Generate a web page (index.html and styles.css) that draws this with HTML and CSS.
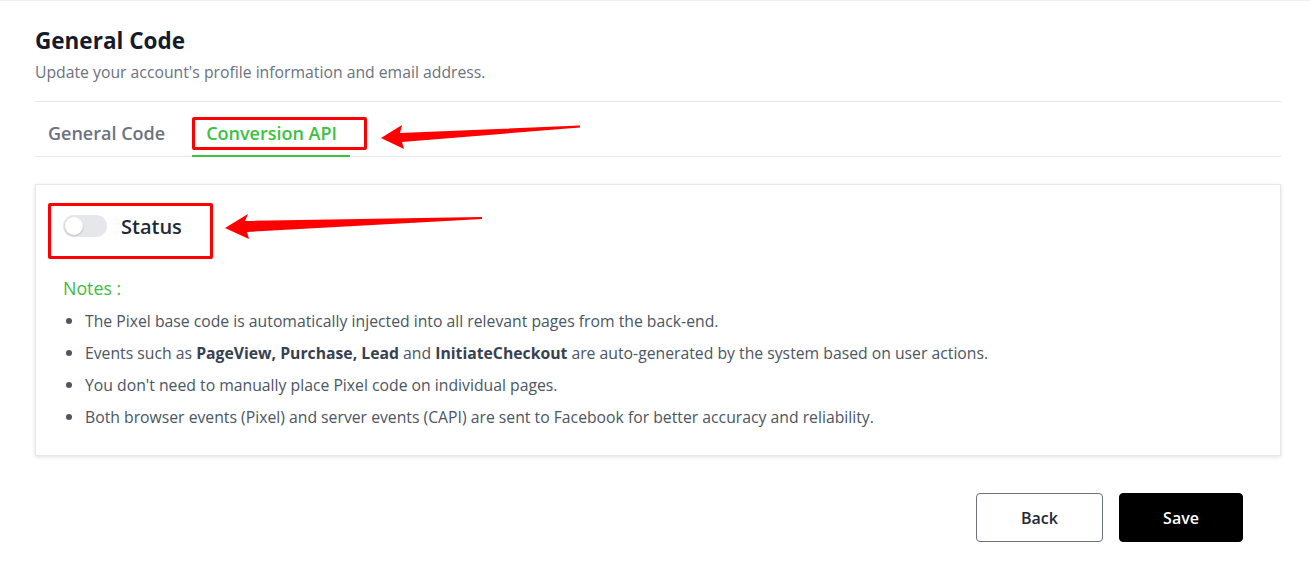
FILE: index.html
```html
<!DOCTYPE html>
<html lang="en">
<head>
<meta charset="utf-8">
<title>General Code</title>
<link rel="stylesheet" href="styles.css">
</head>
<body>
<div class="page">
  <header class="header">
    <h1 class="title">General Code</h1>
    <p class="subtitle">Update your account's profile information and email address.</p>
  </header>

  <nav class="tabs">
    <a class="tab">General Code</a>
    <a class="tab tab-active">Conversion API</a>
  </nav>

  <section class="card">
    <div class="status-row">
      <span class="toggle"><span class="knob"></span></span>
      <span class="status-label">Status</span>
    </div>
    <div class="notes-title">Notes :</div>
    <ul class="notes">
      <li>The Pixel base code is automatically injected into all relevant pages from the back-end.</li>
      <li>Events such as <b>PageView, Purchase, Lead</b> and <b>InitiateCheckout</b> are auto-generated by the system based on user actions.</li>
      <li>You don't need to manually place Pixel code on individual pages.</li>
      <li>Both browser events (Pixel) and server events (CAPI) are sent to Facebook for better accuracy and reliability.</li>
    </ul>
  </section>

  <div class="actions">
    <button class="btn btn-back">Back</button>
    <button class="btn btn-save">Save</button>
  </div>

  <div class="mark mark-tab"></div>
  <div class="mark mark-status"></div>
  <svg class="arrows" width="1310" height="575" viewBox="0 0 1310 575">
    <polygon fill="#ff0000" points="381,137 402,124 400,132 580,124.5 580,126.5 402,141 404,148"/>
    <polygon fill="#ff0000" points="225,227 248,213 245,220 482,216 482,218 247,231 249,238"/>
  </svg>
</div>
</body>
</html>
```

FILE: styles.css
```css
* { box-sizing: border-box; }

html, body {
  margin: 0;
  padding: 0;
  background: #ffffff;
}

body {
  font-family: "Open Sans", "Noto Sans", "Liberation Sans", sans-serif;
  color: #4b5563;
}

.page {
  position: relative;
  width: 1310px;
  height: 575px;
  border-top: 1px solid #eeeeee;
  padding: 25px 29px 0 35px;
}

.header {
  border-bottom: 1px solid #e5e7eb;
  padding-bottom: 18px;
}

.title {
  margin: 0 0 5px 0;
  font-size: 22.5px;
  line-height: 30px;
  font-weight: 700;
  color: #151b2b;
}

.subtitle {
  margin: 0;
  font-size: 15.75px;
  line-height: 22px;
  color: #6b7280;
}

.tabs {
  display: flex;
  gap: 14px;
  height: 55px;
  border-bottom: 1px solid #e5e7eb;
}

.tab {
  display: flex;
  align-items: center;
  padding: 8px 13px 0 13px;
  font-size: 18px;
  font-weight: 600;
  color: #6b7280;
  border-bottom: 2px solid transparent;
  margin-bottom: -1px;
}

.tab-active {
  padding-left: 14px;
  color: #3bc23f;
  border-bottom-color: #3bc23f;
}

.card {
  margin-top: 27px;
  border: 1px solid #e5e7eb;
  box-shadow: 0 1px 4px rgba(0, 0, 0, 0.12);
  padding: 26px 28px 25px 27px;
  height: 272px;
}

.status-row {
  display: flex;
  align-items: center;
  gap: 14px;
  height: 30px;
}

.toggle {
  position: relative;
  display: inline-block;
  width: 44px;
  height: 22px;
  border-radius: 11px;
  background: #e5e7eb;
}

.knob {
  position: absolute;
  top: 2px;
  left: 2px;
  width: 18px;
  height: 18px;
  border-radius: 50%;
  background: #ffffff;
  box-shadow: 0 1px 2px rgba(0, 0, 0, 0.2);
}

.status-label {
  font-size: 20px;
  font-weight: 600;
  color: #1f2937;
}

.notes-title {
  margin-top: 35px;
  font-size: 17.8px;
  line-height: 24px;
  color: #3dbb45;
}

.notes {
  margin: 5px 0 0 0;
  padding-left: 22px;
  font-size: 15.75px;
  line-height: 31px;
  color: #4b5563;
}

.notes li::marker {
  font-size: 17px;
}

.notes b {
  font-weight: 700;
  color: #374151;
}

.actions {
  display: flex;
  justify-content: flex-end;
  gap: 16px;
  margin-top: 37px;
  padding-right: 38px;
}

.btn {
  font-family: "Open Sans", "Noto Sans", "Liberation Sans", sans-serif;
  font-size: 16px;
  font-weight: 600;
  height: 49px;
  border-radius: 4px;
  cursor: pointer;
}

.btn-back {
  width: 127px;
  background: #ffffff;
  border: 1px solid #6b7280;
  color: #1f2937;
}

.btn-save {
  width: 124px;
  background: #000000;
  border: 1px solid #000000;
  color: #ffffff;
}

.mark {
  position: absolute;
  border: 3px solid #ff0000;
  border-radius: 2px;
  pointer-events: none;
}

.mark-tab {
  left: 192px;
  top: 116px;
  width: 175px;
  height: 33px;
}

.mark-status {
  left: 48px;
  top: 202px;
  width: 165px;
  height: 56px;
}

.arrows {
  position: absolute;
  left: 0;
  top: 0;
  pointer-events: none;
}
```
